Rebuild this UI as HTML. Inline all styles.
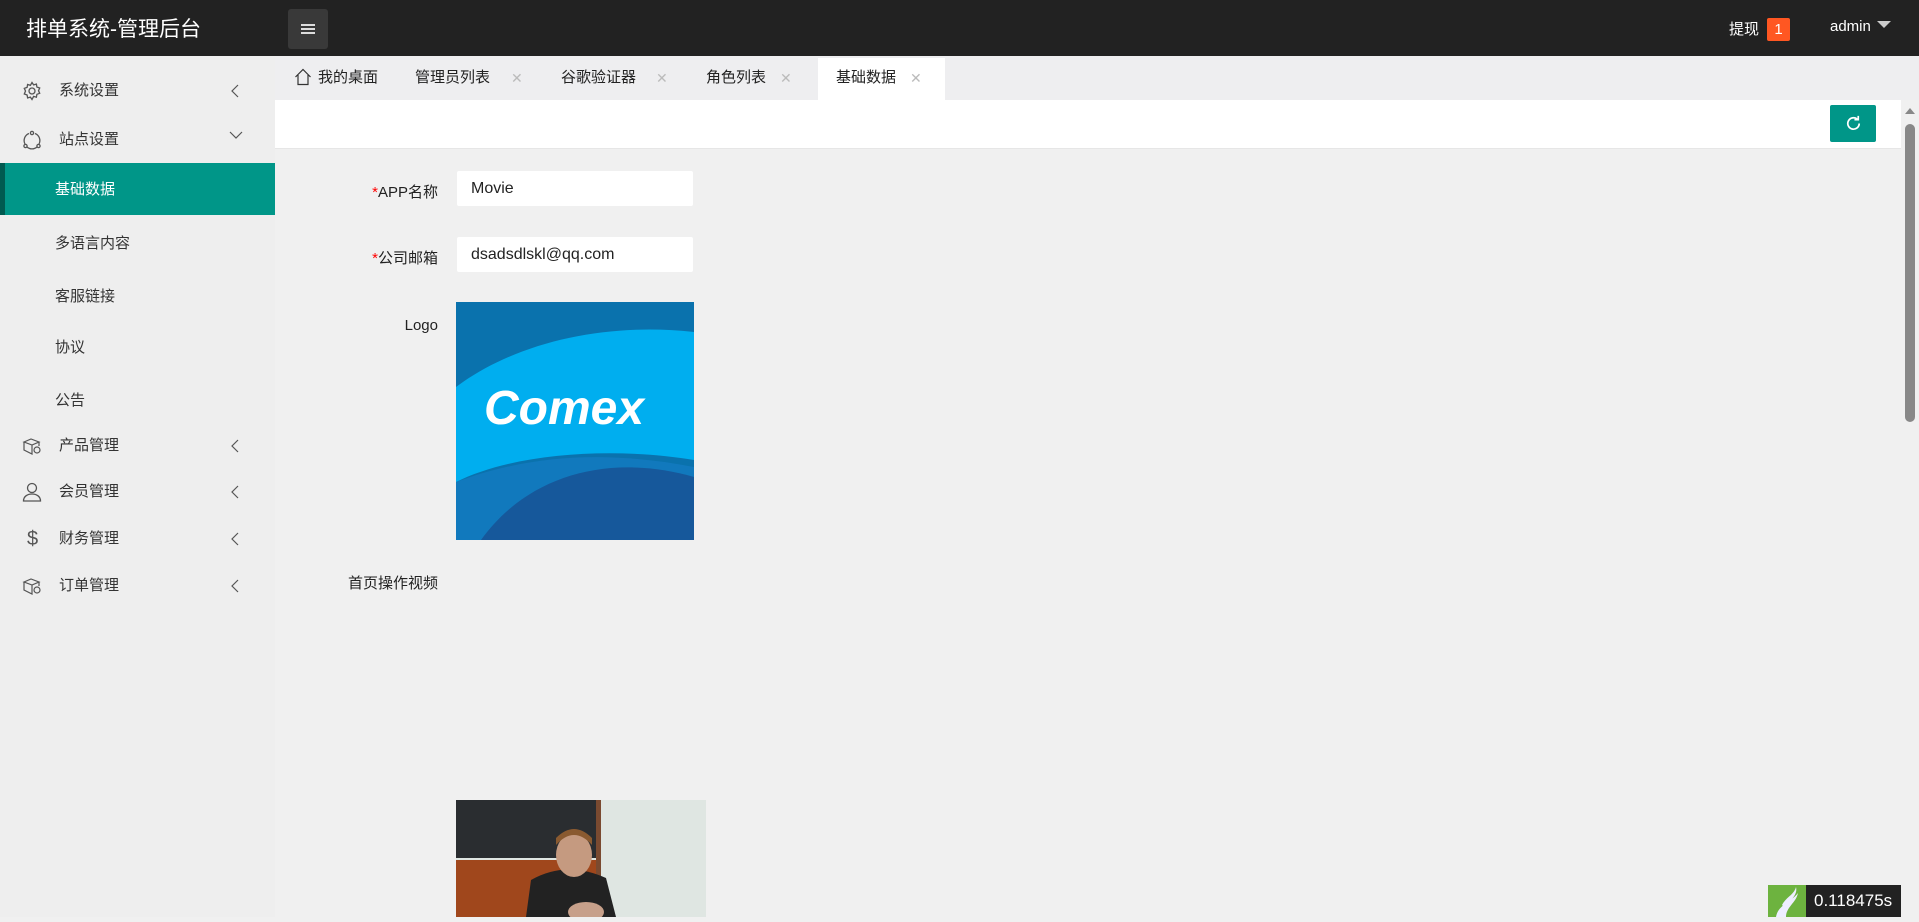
<!DOCTYPE html>
<html><head><meta charset="utf-8"><style>
*{margin:0;padding:0;box-sizing:border-box}
body{width:1919px;height:917px;overflow:hidden;background:#f0f0f0;font-family:"Liberation Sans","Noto Sans CJK SC",sans-serif;position:relative;color:#333}
.hd{position:absolute;left:0;top:0;width:1919px;height:56px;background:#222}
.title{position:absolute;left:26px;top:13px;color:#fff;font-size:21px}
.mbtn{position:absolute;left:288px;top:9px;width:40px;height:40px;background:#393939;border-radius:3px}
.mbtn i{position:absolute;left:13px;width:14px;height:2px;background:#ddd}
.side{position:absolute;left:0;top:56px;width:275px;height:861px;background:#eee}
.it{position:absolute;left:0;width:275px;height:40px;font-size:15px;color:#333;line-height:40px}
.it .ic{position:absolute;left:22px;top:10px;width:20px;height:20px}
.it .t{position:absolute;left:59px}
.it .ar{position:absolute;left:228px;top:12px;width:16px;height:16px}
.sub{position:absolute;left:55px;font-size:15px;color:#333}
.act{position:absolute;left:0;top:163px;width:275px;height:52px;background:#009688;border-left:5px solid #005a50}
.act span{position:absolute;left:50px;top:15px;color:#fff;font-size:15px}
.tabs{position:absolute;left:275px;top:56px;width:1644px;height:44px;background:#eeeef0}
.tab{position:absolute;top:0;height:44px;line-height:44px;font-size:15px;color:#222}
.x{position:absolute;color:#bbb;font-size:14px;top:0}
.acttab{position:absolute;left:543px;top:2px;width:127px;height:44px;background:#fff}
.bar{position:absolute;left:275px;top:100px;width:1626px;height:49px;background:#fff;border-bottom:1px solid #e6e6e6}
.ref{position:absolute;left:1830px;top:105px;width:46px;height:37px;background:#009688;border-radius:2px}
.lab{position:absolute;right:1481px;font-size:15px;color:#222;white-space:nowrap}
.lab b{color:#f00;font-weight:normal}
.inp{position:absolute;left:457px;width:236px;height:35px;background:#fff;border-radius:2px;font-size:16px;line-height:35px;padding-left:14px;color:#222}
.sb{position:absolute;left:1901px;top:100px;width:18px;height:817px;background:#f0f0f0}
</style></head><body>
<div class="hd">
<div class="title">排单系统-管理后台</div>
<div class="mbtn"><i style="top:15px"></i><i style="top:19px"></i><i style="top:23px"></i></div>
<div style="position:absolute;left:1729px;top:18px;color:#fff;font-size:15px">提现</div>
<div style="position:absolute;left:1767px;top:18px;width:23px;height:23px;background:#ff5722;border-radius:2px;color:#fff;font-size:15px;text-align:center;line-height:23px">1</div>
<div style="position:absolute;left:1830px;top:18px;color:#fff;font-size:15px">admin</div>
<div style="position:absolute;left:1877px;top:21px;width:0;height:0;border-left:7px solid transparent;border-right:7px solid transparent;border-top:7px solid #ccc"></div>
</div>

<div class="side">
<div class="it" style="top:15px"><svg class="ic" viewBox="0 0 20 20" fill="none" stroke="#555" stroke-width="1.3"><circle cx="10" cy="10" r="3"/><path d="M10 1.5l1.6 2.4 2.8-.8.5 2.9 2.8 1-1.2 2.7 1.2 2.6-2.8 1-.5 2.9-2.8-.8L10 18.5l-1.6-2.4-2.8.8-.5-2.9-2.8-1L3.5 10 2.3 7.4l2.8-1 .5-2.9 2.8.8z"/></svg><span class="t">系统设置</span><svg class="ar" viewBox="0 0 16 16" fill="none" stroke="#555" stroke-width="1.2"><path d="M10 2L4 8l6 6"/></svg></div>
<div class="it" style="top:64px"><svg class="ic" viewBox="0 0 20 20" fill="none" stroke="#555" stroke-width="1.3"><path d="M7 3.5A7.5 7.5 0 0 0 3 14M13 3.5A7.5 7.5 0 0 1 17 14M5 17a7.5 7.5 0 0 0 10 0"/><circle cx="10" cy="3" r="1.6"/><circle cx="3.5" cy="16" r="1.6"/><circle cx="16.5" cy="16" r="1.6"/></svg><span class="t">站点设置</span><svg class="ar" style="top:7px" viewBox="0 0 16 16" fill="none" stroke="#555" stroke-width="1.2"><path d="M2 5l6 6 6-6"/></svg></div>
<div class="sub" style="top:176px">多语言内容</div>
<div class="sub" style="top:229px">客服链接</div>
<div class="sub" style="top:280px">协议</div>
<div class="sub" style="top:333px">公告</div>
<div class="it" style="top:370px"><svg class="ic" viewBox="0 0 20 20" fill="none" stroke="#555" stroke-width="1.2"><path d="M2 6l7-3 8 3-7 3z M2 6v8l8 4V9 M17 6v4"/><circle cx="15" cy="14" r="3"/></svg><span class="t">产品管理</span><svg class="ar" viewBox="0 0 16 16" fill="none" stroke="#555" stroke-width="1.2"><path d="M10 2L4 8l6 6"/></svg></div>
<div class="it" style="top:416px"><svg class="ic" viewBox="0 0 20 20" fill="none" stroke="#555" stroke-width="1.3"><circle cx="10" cy="6" r="4.5"/><path d="M1.5 19c0-4.5 3.8-7 8.5-7s8.5 2.5 8.5 7z"/></svg><span class="t">会员管理</span><svg class="ar" viewBox="0 0 16 16" fill="none" stroke="#555" stroke-width="1.2"><path d="M10 2L4 8l6 6"/></svg></div>
<div class="it" style="top:463px"><span style="position:absolute;left:27px;top:0;font-size:20px;color:#555">$</span><span class="t">财务管理</span><svg class="ar" viewBox="0 0 16 16" fill="none" stroke="#555" stroke-width="1.2"><path d="M10 2L4 8l6 6"/></svg></div>
<div class="it" style="top:510px"><svg class="ic" viewBox="0 0 20 20" fill="none" stroke="#555" stroke-width="1.2"><path d="M2 6l7-3 8 3-7 3z M2 6v8l8 4V9 M17 6v4"/><circle cx="15" cy="14" r="3"/></svg><span class="t">订单管理</span><svg class="ar" viewBox="0 0 16 16" fill="none" stroke="#555" stroke-width="1.2"><path d="M10 2L4 8l6 6"/></svg></div>
</div>
<div class="act"><span>基础数据</span></div>

<div class="tabs">
<svg style="position:absolute;left:19px;top:12px" width="18" height="18" viewBox="0 0 18 18" fill="none" stroke="#333" stroke-width="1.2"><path d="M1.5 9L9 1.5 16.5 9M4 7v9.5h10V7"/></svg>
<div class="tab" style="left:43px">我的桌面</div>
<div class="tab" style="left:140px">管理员列表</div><div class="x" style="left:236px;line-height:44px">✕</div>
<div class="tab" style="left:286px">谷歌验证器</div><div class="x" style="left:381px;line-height:44px">✕</div>
<div class="tab" style="left:431px">角色列表</div><div class="x" style="left:505px;line-height:44px">✕</div>
<div class="acttab"></div>
<div class="tab" style="left:561px">基础数据</div><div class="x" style="left:635px;line-height:44px">✕</div>
</div>

<div class="bar"></div>
<div class="ref"><svg style="position:absolute;left:14px;top:9px" width="19" height="19" viewBox="0 0 20 20" fill="none" stroke="#fff" stroke-width="1.8"><path d="M16 10a6 6 0 1 1-2-4.5"/><path d="M15 2v4h-4" /></svg></div>

<div class="lab" style="top:181px"><b>*</b>APP名称</div>
<div class="inp" style="top:171px">Movie</div>
<div class="lab" style="top:247px"><b>*</b>公司邮箱</div>
<div class="inp" style="top:237px">dsadsdlskl@qq.com</div>
<div class="lab" style="top:317px">Logo</div>
<svg style="position:absolute;left:456px;top:302px" width="238" height="238" viewBox="0 0 238 238">
<rect width="238" height="238" fill="#0a72ad"/>
<path d="M0 85 C60 40 150 20 238 30 V158 C160 145 60 150 0 180Z" fill="#00aeef"/>
<path d="M0 180 C80 150 160 150 238 165 V238 H0Z" fill="#1179bd"/>
<path d="M25 238 C70 175 150 150 238 175 V238Z" fill="#16589b"/>
<text x="28" y="122" font-family="Liberation Sans" font-weight="bold" font-style="italic" font-size="48" fill="#fff">Comex</text>
</svg>
<div class="lab" style="top:572px">首页操作视频</div>
<svg style="position:absolute;left:456px;top:800px" width="250" height="117" viewBox="0 0 250 117">
<rect width="250" height="117" fill="#dfe6e2"/>
<rect width="144" height="58" fill="#2a2d30"/>
<rect x="0" y="60" width="144" height="57" fill="#a0471c"/>
<rect x="140" width="5" height="117" fill="#7a4a30"/>
<path d="M70 117 L75 80 Q110 60 150 78 L160 117Z" fill="#222"/>
<ellipse cx="118" cy="55" rx="18" ry="22" fill="#c59a80"/>
<path d="M100 45 Q118 25 136 45 L136 38 Q118 20 100 38Z" fill="#8a5a30"/>
<ellipse cx="130" cy="112" rx="18" ry="10" fill="#c7a08a"/>
</svg>

<div class="sb"><div style="position:absolute;left:4px;top:8px;border-left:5px solid transparent;border-right:5px solid transparent;border-bottom:6px solid #888"></div><div style="position:absolute;left:4px;top:24px;width:10px;height:298px;background:#888;border-radius:5px"></div></div>

<div style="position:absolute;left:1768px;top:885px;width:38px;height:32px;background:#6db33f"><svg width="38" height="32" viewBox="0 0 38 32"><path d="M8 32 C10 20 22 18 30 8 C28 18 18 22 18 32Z M14 20 C18 12 26 10 28 2 C30 10 22 16 16 22Z" fill="#eef"/></svg></div>
<div style="position:absolute;left:1806px;top:885px;width:95px;height:32px;background:#222;color:#fff;font-size:17px;line-height:32px;padding-left:8px">0.118475s</div>
</body></html>
